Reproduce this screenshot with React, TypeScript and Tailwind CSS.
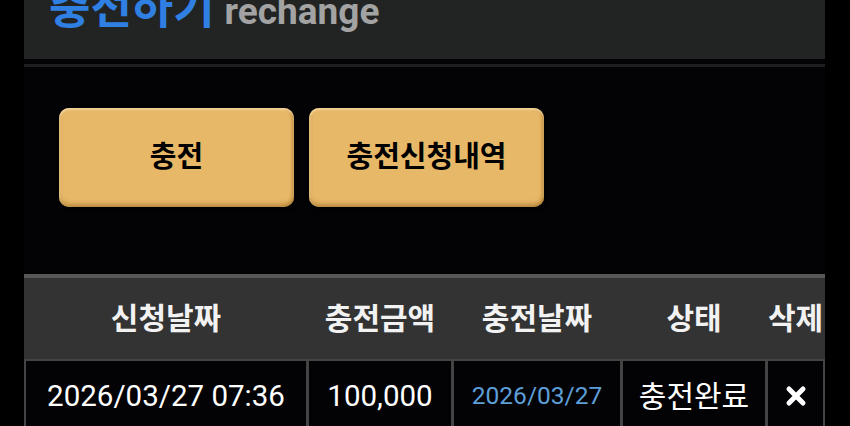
import React from "react";

const F = { fontFamily: "Roboto, 'Noto Sans CJK KR', 'Noto Sans', sans-serif" };

export default function App() {
  const cols = [
    { w: "w-[280px]", h: "신청날짜" },
    { w: "w-[142px]", h: "충전금액" },
    { w: "w-[166px]", h: "충전날짜" },
    { w: "w-[142px]", h: "상태" },
    { w: "w-[55px]", h: "삭제" },
  ];
  const btn =
    "w-[235px] h-[99px] rounded-[10px] bg-[#e7b867] text-[29px] font-bold text-black shadow-[inset_0_2px_2px_rgba(255,235,190,0.6),inset_0_-3px_4px_rgba(150,100,30,0.5),inset_2px_0_2px_rgba(255,235,190,0.3),inset_-2px_0_3px_rgba(150,100,30,0.35),0_2px_4px_rgba(0,0,0,0.6)]";
  return (
    <div className="w-[850px] h-[426px] overflow-hidden bg-[#030306] flex" style={F}>
      <div className="w-[24px] bg-black shrink-0" />
      <div className="w-[801px] shrink-0 flex flex-col">
        <div className="h-[59px] shrink-0 bg-[#222423] overflow-hidden pl-[25px]">
          <div className="mt-[-14px] flex items-baseline leading-none whitespace-nowrap">
            <span className="text-[45px] font-bold text-[#2f80e2]">충전하기</span>
            <span className="ml-[10px] text-[37px] font-bold text-[#a3a3a3]">rechange</span>
          </div>
        </div>
        <div className="h-[5px] shrink-0" />
        <div className="h-[3px] shrink-0 bg-[#1d1d22]" />
        <div className="flex shrink-0 gap-[15px] pl-[35px] mt-[41px]">
          <button className={btn}>충전</button>
          <button className={btn}>충전신청내역</button>
        </div>
        <div className="mt-[67px] shrink-0 flex flex-col">
          <div className="h-[4px] shrink-0 bg-[#575757]" />
          <div className="h-[81px] shrink-0 bg-[#333333] flex px-[2px] gap-[3px]">
            {cols.map((c) => (
              <div key={c.h} className={`${c.w} shrink-0 flex items-center justify-center text-[30px] font-bold text-[#f2f2f2] whitespace-nowrap`}>
                {c.h}
              </div>
            ))}
          </div>
          <div className="h-[72px] shrink-0 bg-[#444444] flex px-[2px] gap-[3px] pt-[2px]">
            <div className="w-[280px] shrink-0 bg-[#030306] flex items-center justify-center text-[29.5px] text-white whitespace-nowrap">2026/03/27 07:36</div>
            <div className="w-[142px] shrink-0 bg-[#030306] flex items-center justify-center text-[29.5px] text-white">100,000</div>
            <div className="w-[166px] shrink-0 bg-[#030306] flex items-center justify-center text-[24.5px] text-[#5d9fd9]">2026/03/27</div>
            <div className="w-[142px] shrink-0 bg-[#030306] flex items-center justify-center text-[30px] text-white whitespace-nowrap">충전완료</div>
            <div className="w-[55px] shrink-0 bg-[#030306] flex items-center justify-center">
              <svg width="22" height="22" viewBox="0 0 22 22">
                <path d="M4 4 L18 18 M18 4 L4 18" stroke="white" strokeWidth="5" strokeLinecap="round" />
              </svg>
            </div>
          </div>
        </div>
      </div>
      <div className="flex-1 bg-black" />
    </div>
  );
}
